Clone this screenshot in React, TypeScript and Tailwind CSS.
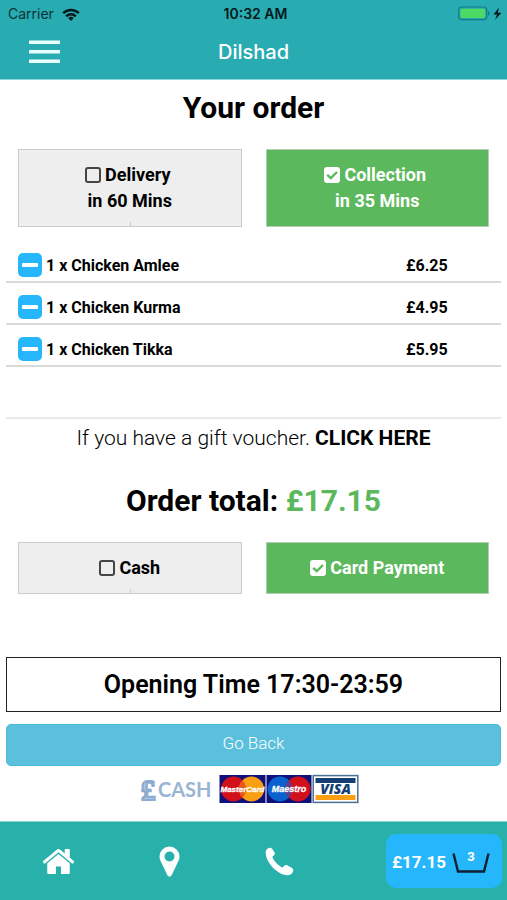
import { useState } from "react";
import clsx from "clsx";

const ORDER_ITEMS = [
  { id: 1, name: "Chicken Amlee", qty: 1, price: "£6.25" },
  { id: 2, name: "Chicken Kurma", qty: 1, price: "£4.95" },
  { id: 3, name: "Chicken Tikka", qty: 1, price: "£5.95" },
];

const ORDER_TOTAL = "£17.15";

const NAV_ITEMS = [
  {
    label: "Home",
    path: "M1472 992v480q0 26-19 45t-45 19h-384v-384h-256v384h-384q-26 0-45-19t-19-45v-480q0-1 .5-3t.5-3l575-474 575 474q1 2 1 6zm223-69l-62 74q-8 9-21 11h-3q-13 0-21-7l-692-577-692 577q-12 8-24 7-13-2-21-11l-62-74q-8-10-7-23.5t11-21.5l719-599q32-26 76-26t76 26l244 204v-195q0-14 9-23t23-9h192q14 0 23 9t9 23v408l219 182q10 8 11 21.5t-7 23.5z",
  },
  {
    label: "Find us",
    path: "M1152 640q0-106-75-181t-181-75-181 75-75 181 75 181 181 75 181-75 75-181zm256 0q0 109-33 179l-364 774q-16 33-47.5 52t-67.5 19-67.5-19-46.5-52l-365-774q-33-70-33-179 0-212 150-362t362-150 362 150 150 362z",
  },
  {
    label: "Call",
    path: "M192 470C180 370 210 290 280 240C350 190 450 170 510 230L640 420C690 500 640 570 530 650C560 820 860 1150 1060 1200C1130 1080 1210 1040 1290 1090L1540 1230C1620 1290 1620 1370 1570 1450C1510 1560 1400 1610 1290 1600C800 1570 210 960 192 470z",
  },
];

type OptionCardProps = {
  group: string;
  label: string;
  detail?: string;
  checked: boolean;
  onSelect: () => void;
};

function OptionCard({ group, label, detail, checked, onSelect }: OptionCardProps) {
  return (
    <label
      className={clsx(
        "relative flex cursor-pointer flex-col items-center border py-3 text-lg leading-[26px] font-bold",
        checked
          ? "border-[#b5ccb5] bg-[#5cb85c] text-white"
          : "border-[#cccccc] bg-[#eeeeee] text-black",
      )}
    >
      <span className={clsx("flex items-center gap-1", detail && "pr-1")}>
        <span className="relative flex">
          <input
            type="radio"
            name={group}
            checked={checked}
            onChange={onSelect}
            className="size-4 appearance-none rounded-[3px] border-2 border-[#444444] checked:border-white checked:bg-white"
          />
          {checked ? (
            <svg
              aria-hidden
              viewBox="0 0 16 16"
              className="pointer-events-none absolute inset-0 size-4"
            >
              <path
                d="M3.2 7.8 6.8 11.2 13 5"
                fill="none"
                stroke="#5cb85c"
                strokeWidth="2.4"
              />
            </svg>
          ) : null}
        </span>
        {label}
      </span>
      {detail ? <span>{detail}</span> : null}
      {!checked ? (
        <span aria-hidden className="absolute bottom-0 left-1/2 h-1 w-px bg-[#cccccc]" />
      ) : null}
    </label>
  );
}

function StatusBar() {
  return (
    <div className="grid h-7 grid-cols-3 items-center pr-1 pl-2 font-[Inter] text-sm">
      <div className="flex items-center gap-2 text-[#0b3335]">
        Carrier
        <svg aria-label="Wi-Fi" viewBox="0 0 18 13" className="h-[13px] w-[18px]">
          <g fill="none" stroke="#06191a" strokeWidth="2.4">
            <path d="M1.2 5.2a11 11 0 0 1 15.6 0" />
            <path d="M4.2 8.3a6.8 6.8 0 0 1 9.6 0" />
          </g>
          <path d="M6.2 10a4 4 0 0 1 5.6 0L9 12.9z" fill="#06191a" />
        </svg>
      </div>
      <div className="text-center font-semibold text-[#06191a]">10:32 AM</div>
      <div className="flex justify-end">
        <svg aria-label="Battery charging" viewBox="0 0 46 16" className="h-4 w-[46px]">
          <rect
            x="1.7"
            y="1"
            width="28"
            height="12.6"
            rx="3"
            fill="none"
            stroke="#147a88"
            strokeWidth="1.2"
          />
          <rect x="3.4" y="2.7" width="24.6" height="9.2" rx="1.5" fill="#4cd964" />
          <path d="M31 5.2v4.4q1.6-.6 1.6-2.2T31 5.2z" fill="#147a88" />
          <path d="M42 1.6 36.5 8.4H40l-1.8 5.4 6.2-7h-3.6z" fill="#06191a" />
        </svg>
      </div>
    </div>
  );
}

function PaymentLogos() {
  return (
    <div className="mt-2 flex justify-center pr-2.5">
      <svg
        role="img"
        aria-label="Cash, MasterCard, Maestro and Visa accepted"
        viewBox="0 0 222 34"
        className="h-[34px] w-[222px]"
      >
        <text
          x="3"
          y="26"
          fontFamily="Liberation Serif"
          fontWeight="700"
          fontSize="29"
          fill="#a9c4e2"
          stroke="#8dabce"
          strokeWidth="2"
        >
          £
        </text>
        <text
          x="20"
          y="23"
          fontFamily="Lato"
          fontWeight="700"
          fontSize="20"
          fill="#9ab5d2"
        >
          CASH
        </text>

        <rect x="81.5" y="1" width="46" height="28" fill="#10107a" />
        <circle cx="95.5" cy="15" r="12.5" fill="#d1101c" />
        <circle cx="113.5" cy="15" r="12.5" fill="#fb9f12" />
        <path d="M104.5 6.3a12.5 12.5 0 0 1 0 17.4 12.5 12.5 0 0 1 0-17.4z" fill="#e5581a" />
        <text
          x="104.5"
          y="18"
          textAnchor="middle"
          fontFamily="Liberation Sans"
          fontWeight="700"
          fontStyle="italic"
          fontSize="8"
          fill="#ffffff"
          stroke="#ffffff"
          strokeWidth="0.3"
        >
          MasterCard
        </text>

        <rect x="128.5" y="1" width="45" height="28" fill="#10107a" />
        <circle cx="142" cy="15" r="12.5" fill="#0a62cf" />
        <circle cx="160" cy="15" r="12.5" fill="#d1101c" />
        <path d="M151 6.3a12.5 12.5 0 0 1 0 17.4 12.5 12.5 0 0 1 0-17.4z" fill="#6a3a86" />
        <text
          x="151"
          y="18"
          textAnchor="middle"
          fontFamily="Liberation Sans"
          fontWeight="700"
          fontStyle="italic"
          fontSize="9"
          fill="#ffffff"
          stroke="#ffffff"
          strokeWidth="0.3"
        >
          Maestro
        </text>

        <rect
          x="175.2"
          y="1.6"
          width="44.6"
          height="26.8"
          fill="#ffffff"
          stroke="#4a6f92"
          strokeWidth="1.5"
        />
        <rect x="177.5" y="4" width="40" height="5" fill="#143f73" />
        <rect x="177.5" y="21" width="40" height="5" fill="#fb9f12" />
        <text
          x="197.5"
          y="20"
          textAnchor="middle"
          fontFamily="Open Sans"
          fontWeight="800"
          fontStyle="italic"
          fontSize="14"
          fill="#143f73"
        >
          VISA
        </text>
      </svg>
    </div>
  );
}

export default function App() {
  const [service, setService] = useState("collection");
  const [payment, setPayment] = useState("card");

  return (
    <div className="flex min-h-screen flex-col bg-white font-[Roboto,sans-serif] text-black">
      <header className="h-20 border-b border-[#8fd6da] bg-[#28abb1]">
        <StatusBar />
        <div className="grid h-12 grid-cols-[1fr_auto_1fr] items-center px-7">
          <button type="button" aria-label="Menu" className="w-8 justify-self-start">
            <svg aria-hidden viewBox="0 0 32 26" className="h-[26px] w-8" fill="#e9ffff">
              <rect x="1" y="1.5" width="31" height="3.5" rx="0.5" />
              <rect x="1" y="11" width="31" height="3.5" rx="0.5" />
              <rect x="1" y="20.5" width="31" height="3.5" rx="0.5" />
            </svg>
          </button>
          <span className="font-[Inter] text-xl font-medium text-white">Dilshad</span>
        </div>
      </header>

      <main className="flex flex-col px-1.5">
        <h1 className="mt-2 text-center text-[30px] leading-10 font-bold">Your order</h1>

        <div className="mt-[21px] grid grid-cols-2 gap-6 px-3">
          <OptionCard
            group="service"
            label="Delivery"
            detail="in 60 Mins"
            checked={service === "delivery"}
            onSelect={() => setService("delivery")}
          />
          <OptionCard
            group="service"
            label="Collection"
            detail="in 35 Mins"
            checked={service === "collection"}
            onSelect={() => setService("collection")}
          />
        </div>

        <ul className="mt-3.5">
          {ORDER_ITEMS.map((item) => (
            <li
              key={item.id}
              className="flex h-[42px] items-end border-b-2 border-[#dadada] pb-1 pl-3 text-base leading-[22px] font-bold"
            >
              <button
                type="button"
                aria-label={`Remove ${item.name}`}
                className="flex size-6 items-center justify-center rounded-[5px] bg-[#25b6fb]"
              >
                <span className="h-1 w-4 rounded-[1px] bg-white" />
              </button>
              <span className="ml-1 flex-1">
                {item.qty} x {item.name}
              </span>
              <span className="w-[95px]">{item.price}</span>
            </li>
          ))}
        </ul>

        <hr className="mt-[50px] border-t-2 border-[#e9e9e9]" />

        <p className="mt-[3px] text-center text-[21px] leading-8 font-light">
          If you have a gift voucher.{" "}
          <a href="#voucher" className="font-bold">
            CLICK HERE
          </a>
        </p>

        <h2 className="mt-[27px] text-center text-[30px] leading-10 font-bold">
          Order total: <span className="text-[#5cb85c]">{ORDER_TOTAL}</span>
        </h2>

        <div className="mt-[21px] grid grid-cols-2 gap-6 px-3">
          <OptionCard
            group="payment"
            label="Cash"
            checked={payment === "cash"}
            onSelect={() => setPayment("cash")}
          />
          <OptionCard
            group="payment"
            label="Card Payment"
            checked={payment === "card"}
            onSelect={() => setPayment("card")}
          />
        </div>

        <p className="mt-[63px] border border-[#222222] py-2 text-center text-[25px] leading-[37px] font-semibold">
          Opening Time 17:30-23:59
        </p>

        <button
          type="button"
          className="mt-3 rounded-[5px] border border-[#46b8da] bg-[#5bc0de] pt-1.5 pb-2.5 text-[17px] leading-6 font-light text-white"
        >
          Go Back
        </button>

        <PaymentLogos />
      </main>

      <footer className="mt-auto border-t border-[#8fd6d0] bg-[#28b0aa] py-3 pr-[5px] pl-[3px]">
        <nav className="flex items-center">
          {NAV_ITEMS.map((item) => (
            <a
              key={item.label}
              href="#"
              aria-label={item.label}
              className="flex w-[22.2%] justify-center"
            >
              <svg aria-hidden viewBox="0 0 1792 1792" className="size-[35px]" fill="#ffffff">
                <path d={item.path} />
              </svg>
            </a>
          ))}
          <button
            type="button"
            className="ml-auto flex h-[54px] w-[116px] items-center justify-center gap-1.5 rounded-[10px] bg-[#25b6fb] pt-1 pr-1.5 text-[17px] font-bold text-white"
          >
            {ORDER_TOTAL}
            <span className="relative flex">
              <svg aria-hidden viewBox="0 0 38 20" className="h-5 w-[38px]">
                <path
                  d="M1.5 .5 6 18.5H32L36.5 .5"
                  fill="none"
                  stroke="#0d2233"
                  strokeWidth="2.4"
                />
              </svg>
              <span className="absolute inset-x-0 -top-1.5 text-center text-[13px] leading-5">
                {ORDER_ITEMS.length}
              </span>
            </span>
          </button>
        </nav>
      </footer>
    </div>
  );
}
